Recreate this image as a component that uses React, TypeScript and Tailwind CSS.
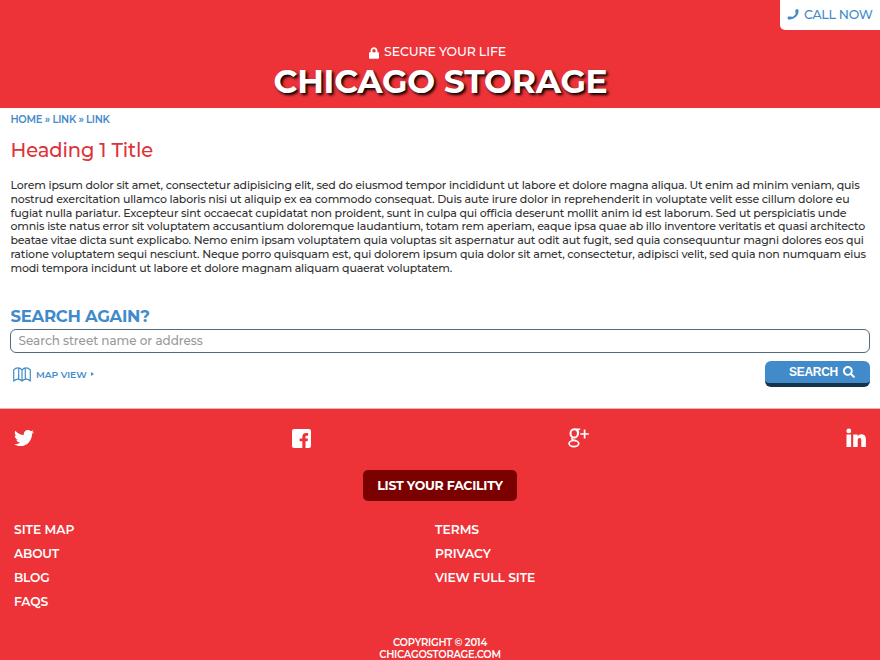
import React from 'react';
import { FaLock, FaTwitter, FaSearch } from 'react-icons/fa';

const body: { text: string; spacing: string }[] = [
  { text: 'Lorem ipsum dolor sit amet, consectetur adipisicing elit, sed do eiusmod tempor incididunt ut labore et dolore magna aliqua. Ut enim ad minim veniam, quis', spacing: 'tracking-[-0.187px]' },
  { text: 'nostrud exercitation ullamco laboris nisi ut aliquip ex ea commodo consequat. Duis aute irure dolor in reprehenderit in voluptate velit esse cillum dolore eu', spacing: 'tracking-[-0.160px]' },
  { text: 'fugiat nulla pariatur. Excepteur sint occaecat cupidatat non proident, sunt in culpa qui officia deserunt mollit anim id est laborum. Sed ut perspiciatis unde', spacing: 'tracking-[-0.173px]' },
  { text: 'omnis iste natus error sit voluptatem accusantium doloremque laudantium, totam rem aperiam, eaque ipsa quae ab illo inventore veritatis et quasi architecto', spacing: 'tracking-[-0.160px]' },
  { text: 'beatae vitae dicta sunt explicabo. Nemo enim ipsam voluptatem quia voluptas sit aspernatur aut odit aut fugit, sed quia consequuntur magni dolores eos qui', spacing: 'tracking-[-0.157px]' },
  { text: 'ratione voluptatem sequi nesciunt. Neque porro quisquam est, qui dolorem ipsum quia dolor sit amet, consectetur, adipisci velit, sed quia non numquam eius', spacing: 'tracking-[-0.160px]' },
  { text: 'modi tempora incidunt ut labore et dolore magnam aliquam quaerat voluptatem.', spacing: 'tracking-[-0.183px]' },
];

function Phone() {
  return (
    <svg viewBox="0 0 12 12" className="h-3 w-3" fill="none" stroke="currentColor" strokeLinecap="round">
      <path d="M10.600 1.300C10.900 5.900 6.700 10 1.800 9.500" strokeWidth="1.900" />
      <path d="M9.700 1.500v1.900M1.900 8.900l1.900-.1" strokeWidth="2.600" />
    </svg>
  );
}

function MapIcon() {
  return (
    <svg viewBox="0 0 18 15" className="h-[15px] w-[18px]" fill="none" stroke="currentColor" strokeWidth="1.200" strokeLinejoin="round">
      <path d="M.7 2.800Q2.500.8 4.900.8T9 2.800Q10.700.8 13.100.8t4.200 2V14q-1.700-1.800-4.200-1.800T9 14q-1.700-1.800-4.100-1.800T.7 14zM5.700.9v11.400M9 2.800V14M12.300.9v11.400" />
    </svg>
  );
}

function Facebook() {
  return (
    <svg viewBox="0 0 18 18" className="h-[19px] w-[19px]" fill="currentColor">
      <path d="M2 0h14a2 2 0 0 1 2 2v14a2 2 0 0 1-2 2h-3.200v-6.500h2l.4-2.600h-2.400V7.500c0-.8.3-1.200 1.300-1.200h1.200V3.900c-.3 0-1.100-.1-2-.1-2.200 0-3.500 1.300-3.500 3.500v1.600H7.200v2.600h2.600V18H2a2 2 0 0 1-2-2V2a2 2 0 0 1 2-2z" />
    </svg>
  );
}

function GooglePlus() {
  return (
    <svg viewBox="0 0 22 20" className="h-5 w-[22px]" fill="none" stroke="currentColor">
      <ellipse cx="6.200" cy="5.400" rx="3.700" ry="4.100" strokeWidth="2" />
      <path d="M6.200 1.200h6M9.300 1.800c1.300 1.400 1.400 3.300.5 5M5 9.300c-1.800 1.200-1.500 2.300.4 2.700l3 .8" strokeWidth="1.500" />
      <ellipse cx="5.900" cy="15.600" rx="4.800" ry="3.100" strokeWidth="1.700" />
      <path d="M12.300 6h8.600M16.600 1.500v9" strokeWidth="1.700" />
    </svg>
  );
}

function LinkedIn() {
  return (
    <svg viewBox="0 0 20 20" className="h-5 w-5" fill="currentColor">
      <circle cx="2.800" cy="2.900" r="2.400" />
      <path d="M.5 6.500h4.600V19H.5zM7.200 6.500h4.400v1.700c.8-1.300 2.100-2 3.700-2 3 0 4.600 1.900 4.600 5.300V19h-4.600v-6.600c0-1.600-.5-2.400-1.700-2.400-1.300 0-1.900.9-1.900 2.500V19H7.200z" />
    </svg>
  );
}

export default function App() {
  return (
    <div className="flex h-[660px] w-[880px] flex-col overflow-hidden bg-white font-['Montserrat','Inter',sans-serif] text-[#333]">
      <header className="relative flex h-[108px] shrink-0 flex-col items-center bg-[#ed3338] pt-[43px] text-white">
        <a className="absolute right-0 top-0 flex h-[30px] w-[100px] items-center gap-[5px] whitespace-nowrap rounded-bl-[5px] bg-white pl-[7px] text-[12.500px] text-[#428bca]">
          <Phone />
          <span className="font-medium tracking-[-0.250px]">CALL NOW</span>
        </a>
        <div className="-ml-[5px] flex h-[18px] items-center gap-[5px] text-[12.500px] font-medium">
          <FaLock className="mt-[2px] h-3 w-[10px]" />
          <span className="mt-px whitespace-nowrap tracking-[-0.120px]">SECURE YOUR LIFE</span>
        </div>
        <h1 className="ml-px whitespace-nowrap text-[33px] font-bold leading-[40px] tracking-[-0.260px] [text-shadow:2px_2px_3px_#000]">CHICAGO STORAGE</h1>
      </header>

      <main className="flex h-[300px] shrink-0 flex-col px-[10px]">
        <nav className="ml-[0.500px] mt-[5px] h-[14px] whitespace-nowrap text-[10px] font-semibold leading-[14px] tracking-[-0.250px] text-[#428bca]">HOME » LINK » LINK</nav>
        <h2 className="ml-[0.500px] mt-[9px] h-[28px] whitespace-nowrap text-[19.500px] font-medium leading-[28px] tracking-[-0.130px] text-[#dd3338]">Heading 1 Title</h2>
        <p className="ml-[0.500px] mt-[15px] text-[11px] font-medium leading-[13.800px]">
          {body.map((l) => (
            <span key={l.text} className={`block whitespace-nowrap ${l.spacing}`}>{l.text}</span>
          ))}
        </p>
        <h3 className="ml-[0.500px] mt-[29px] h-[22px] whitespace-nowrap text-[16.500px] font-bold leading-[22px] tracking-[-0.270px] text-[#428bca]">SEARCH AGAIN?</h3>
        <div className="mt-[2px] flex h-[24px] shrink-0 items-center rounded-[6px] border border-[#53697c] pl-[7.500px] pt-px text-[12px] font-medium text-[#999]">
          <span className="whitespace-nowrap tracking-[-0.040px]">Search street name or address</span>
        </div>
        <div className="flex items-start justify-between">
          <a className="mt-[13px] flex h-[17px] items-center pl-[3px] text-[9.200px] font-semibold text-[#428bca]">
            <MapIcon />
            <span className="ml-[5px] mt-px whitespace-nowrap tracking-[-0.040px]">MAP VIEW</span>
            <span className="ml-[4px] border-y-[2.500px] border-l-[3px] border-y-transparent border-l-[#428bca]" />
          </a>
          <button className="mt-[8px] flex h-[26px] w-[105px] items-center justify-center gap-[5px] rounded-[6px] border-b-[4px] border-[#17324b] bg-[#428bca] pl-[9px] pt-px font-['Liberation_Sans',sans-serif] text-[12px] font-bold text-white">
            <span className="tracking-[-0.300px]">SEARCH</span>
            <FaSearch className="h-[12px] w-[12px]" />
          </button>
        </div>
      </main>

      <footer className="flex flex-1 flex-col border-t border-[#d8b8b8] bg-[#ed3338] text-white">
        <div className="flex h-[58px] items-center justify-between px-[14px]">
          <FaTwitter className="h-[20px] w-[20px]" />
          <span className="ml-[2px]"><Facebook /></span>
          <GooglePlus />
          <LinkedIn />
        </div>
        <button className="mt-[3px] h-[31px] w-[154px] self-center whitespace-nowrap rounded-[5px] bg-[#7b0000] pt-px text-[12.500px] font-bold tracking-[-0.250px]">LIST YOUR FACILITY</button>
        <div className="mt-[17px] grid h-[96px] grid-cols-2 text-[12.300px] font-semibold leading-[24px]">
          <ul className="pl-[14px]">
            <li className="tracking-[-0.030px]">SITE MAP</li>
            <li className="tracking-[-0.200px]">ABOUT</li>
            <li className="tracking-[-0.250px]">BLOG</li>
            <li className="tracking-[-0.150px]">FAQS</li>
          </ul>
          <ul className="-ml-[5px]">
            <li>TERMS</li>
            <li>PRIVACY</li>
            <li className="tracking-[-0.080px]">VIEW FULL SITE</li>
          </ul>
        </div>
        <div className="mt-[23px] text-center text-[10px] font-semibold leading-[12px] tracking-[-0.240px]">
          <div>COPYRIGHT © 2014</div>
          <div>CHICAGOSTORAGE.COM</div>
        </div>
      </footer>
    </div>
  );
}
